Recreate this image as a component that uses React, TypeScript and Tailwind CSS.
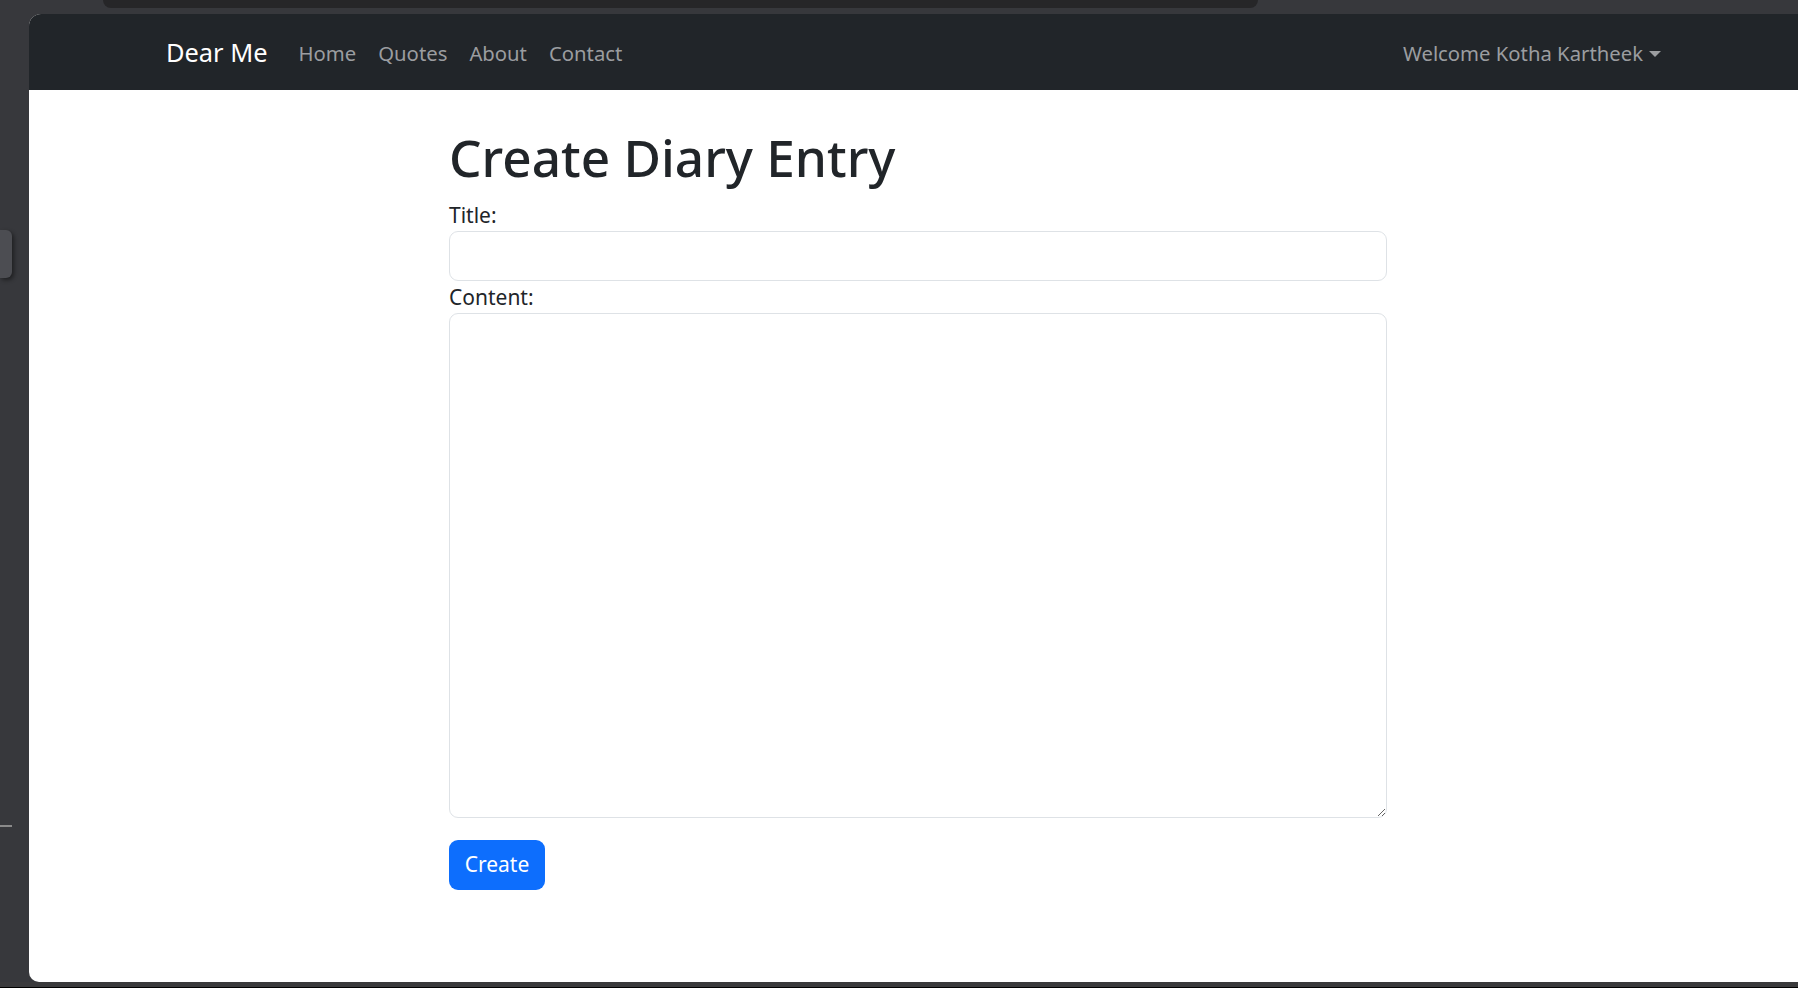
import React from "react";

export default function App() {
  return (
    <div className="w-[1798px] h-[988px] bg-[#37383c] overflow-hidden flex flex-col font-['Noto_Sans',sans-serif]">
      {/* browser chrome strip */}
      <div className="h-[14px] shrink-0 flex">
        <div className="ml-[103px] w-[1155px] h-[8px] bg-[#262628] rounded-b-[9px]" />
      </div>

      <div className="flex flex-1 min-h-0">
        {/* left gutter */}
        <div className="w-[29px] shrink-0 flex flex-col">
          <div className="mt-[216px] w-[12px] h-[48px] bg-[#4c4d52] rounded-r-[6px] shadow-[2px_2px_4px_rgba(0,0,0,0.45)]" />
          <div className="mt-[547px] w-[12px] h-[2px] bg-[#8a8a8a]" />
        </div>

        {/* page frame */}
        <div className="w-[1778px] shrink-0 bg-white rounded-tl-[12px] rounded-bl-[10px] flex flex-col overflow-hidden">
          {/* navbar */}
          <nav className="h-[76px] shrink-0 bg-[#212529] flex items-center justify-between pl-[137px] pr-[146px] pt-[2px]">
            <div className="flex items-center">
              <span className="text-white text-[25.4px] leading-none mr-[31px]">Dear Me</span>
              <div className="flex items-center gap-[22px] text-[20.3px] leading-none text-[#9b9da0]">
                <span>Home</span>
                <span>Quotes</span>
                <span>About</span>
                <span>Contact</span>
              </div>
            </div>
            <div className="flex items-center text-[20.3px] leading-none text-[#9b9da0]">
              <span>Welcome Kotha Kartheek</span>
              <span className="ml-[6px] w-0 h-0 border-t-[6px] border-t-[#9b9da0] border-x-[6.5px] border-x-transparent mt-[2px]" />
            </div>
          </nav>

          {/* main */}
          <main className="w-[938px] mx-auto pt-[36px] text-[#212529]">
            <h1 className="text-[51.3px] leading-[62px] font-medium mb-[11px]">Create Diary Entry</h1>
            <form className="flex flex-col" onSubmit={(e) => e.preventDefault()}>
              <label className="text-[21px] leading-[32px]">Title:</label>
              <input
                type="text"
                className="h-[50px] w-full border border-[#dee2e6] rounded-[9px] px-[18px] text-[21px] outline-none"
              />
              <label className="text-[21px] leading-[32px]">Content:</label>
              <textarea className="h-[505px] w-full border border-[#dee2e6] rounded-[9px] px-[18px] py-[9px] text-[21px] outline-none" />
              <div className="mt-[22px]">
                <button
                  type="submit"
                  className="w-[96px] h-[50px] bg-[#0d6efd] text-white text-[21px] rounded-[9px] flex items-center justify-center"
                >
                  Create
                </button>
              </div>
            </form>
          </main>
        </div>
      </div>

      <div className="h-[6px] shrink-0 bg-[#3a3a3c] border-b border-black" />
    </div>
  );
}
